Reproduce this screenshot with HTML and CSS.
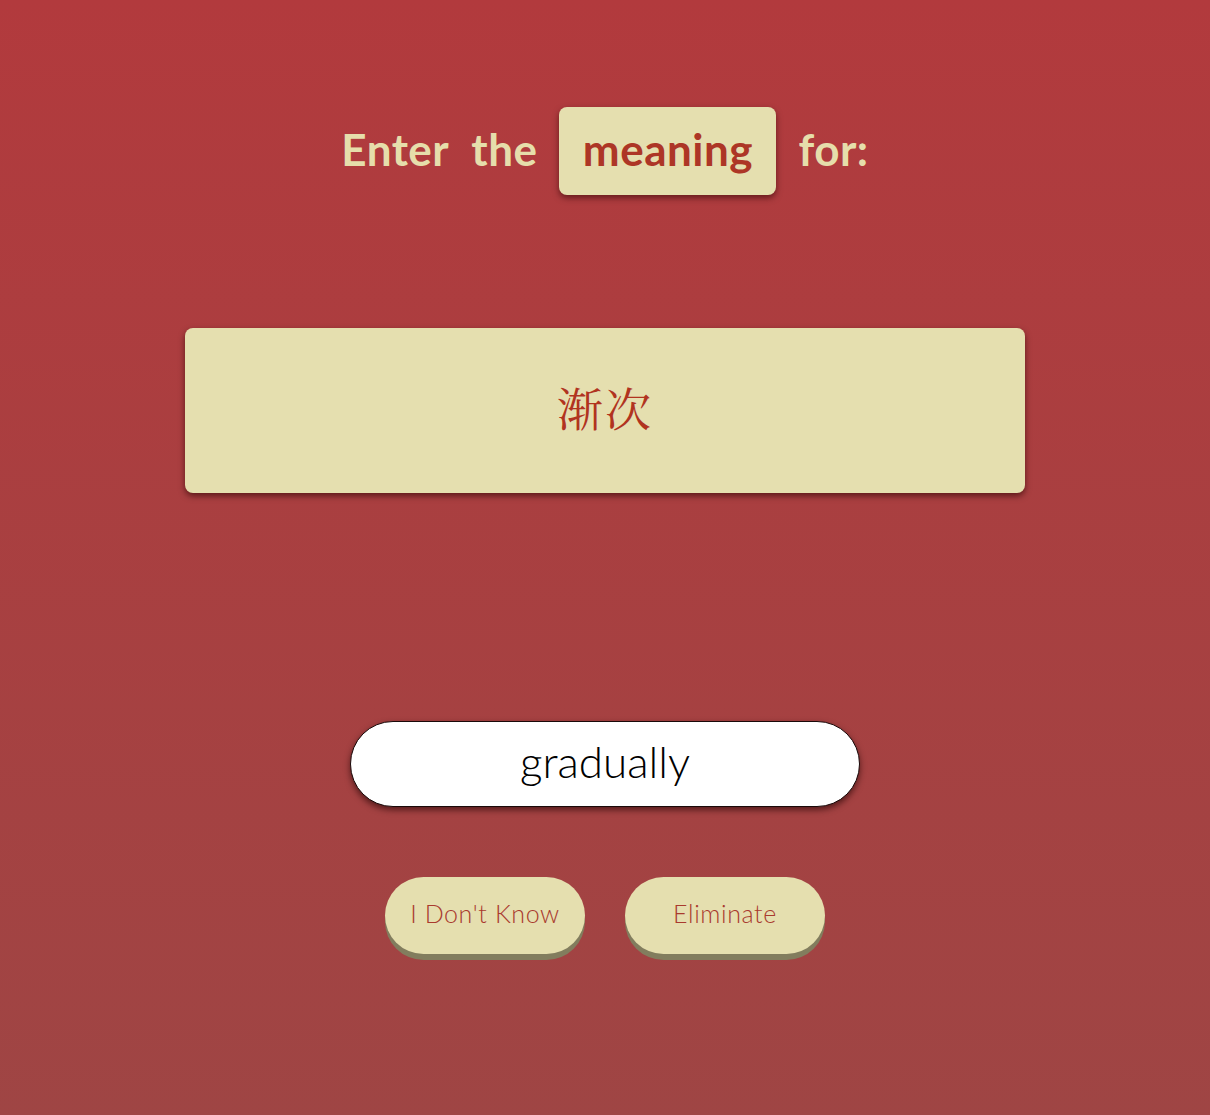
FILE: index.html
```html
<!DOCTYPE html>
<html lang="en">
<head>
<meta charset="utf-8">
<title>Quiz</title>
<link rel="stylesheet" href="styles.css">
</head>
<body>
<main class="page">
  <h1 class="prompt">
    <span class="prompt-word">Enter</span>
    <span class="prompt-word">the</span>
    <span class="prompt-tag">meaning</span>
    <span class="prompt-word">for:</span>
  </h1>
  <section class="card">
    <p class="hanzi" lang="zh-CN">渐次</p>
  </section>
  <div class="answer-row">
    <input class="answer" type="text" value="gradually">
  </div>
  <div class="actions">
    <button class="btn" type="button">I Don't Know</button>
    <button class="btn" type="button">Eliminate</button>
  </div>
</main>
</body>
</html>
```
FILE: styles.css
```css
html, body {
  margin: 0;
  padding: 0;
  height: 100%;
}
body {
  background: linear-gradient(to bottom, #b23a3d 0%, #9f4544 100%);
  font-family: "Lato", "Noto Sans", sans-serif;
  min-height: 1115px;
}
.page {
  display: flex;
  flex-direction: column;
  align-items: center;
  padding-top: 107px;
}
.prompt {
  margin: 0;
  display: flex;
  align-items: center;
  gap: 22px;
  font-size: 44px;
  font-weight: 700;
  color: #e6deab;
  letter-spacing: 0.5px;
}
.prompt-word {
  line-height: 1;
  margin-top: -4px;
}
.prompt-tag {
  background: #e5dfaf;
  color: #ad3626;
  border-radius: 8px;
  height: 88px;
  width: 217px;
  padding-bottom: 5px;
  display: flex;
  align-items: center;
  justify-content: center;
  box-shadow: 0 3px 6px rgba(40, 0, 0, 0.55);
  box-sizing: border-box;
}
.card {
  margin-top: 133px;
  width: 840px;
  height: 165px;
  background: #e5dfaf;
  border-radius: 8px;
  box-shadow: 0 3px 6px rgba(40, 0, 0, 0.6);
  display: flex;
  align-items: center;
  justify-content: center;
}
.hanzi {
  margin: 0 0 10px;
  font-family: "Noto Serif CJK SC", "Noto Sans CJK SC", serif;
  font-size: 46px;
  font-weight: 400;
  color: #b1341f;
  letter-spacing: 2px;
}
.answer-row {
  margin-top: 228px;
}
.answer {
  width: 510px;
  height: 86px;
  box-sizing: border-box;
  border: 1px solid #1a0a0a;
  border-radius: 43px;
  background: #ffffff;
  box-shadow: 0 3px 6px rgba(30, 0, 0, 0.6);
  text-align: center;
  font-family: "Lato", "Noto Sans", sans-serif;
  font-size: 44px;
  font-weight: 300;
  color: #000;
  padding: 0 20px 7px;
  outline: none;
}
.actions {
  margin-top: 70px;
  display: flex;
  gap: 40px;
}
.btn {
  width: 200px;
  height: 77px;
  border: none;
  border-radius: 39px;
  background: #e5dfaf;
  box-shadow: 0 6px 0 #827d5e;
  color: #a93a2e;
  font-family: "Lato", "Noto Sans", sans-serif;
  font-size: 25px;
  font-weight: 300;
  letter-spacing: 0.6px;
  cursor: pointer;
  padding: 0 0 6px;
}
```
